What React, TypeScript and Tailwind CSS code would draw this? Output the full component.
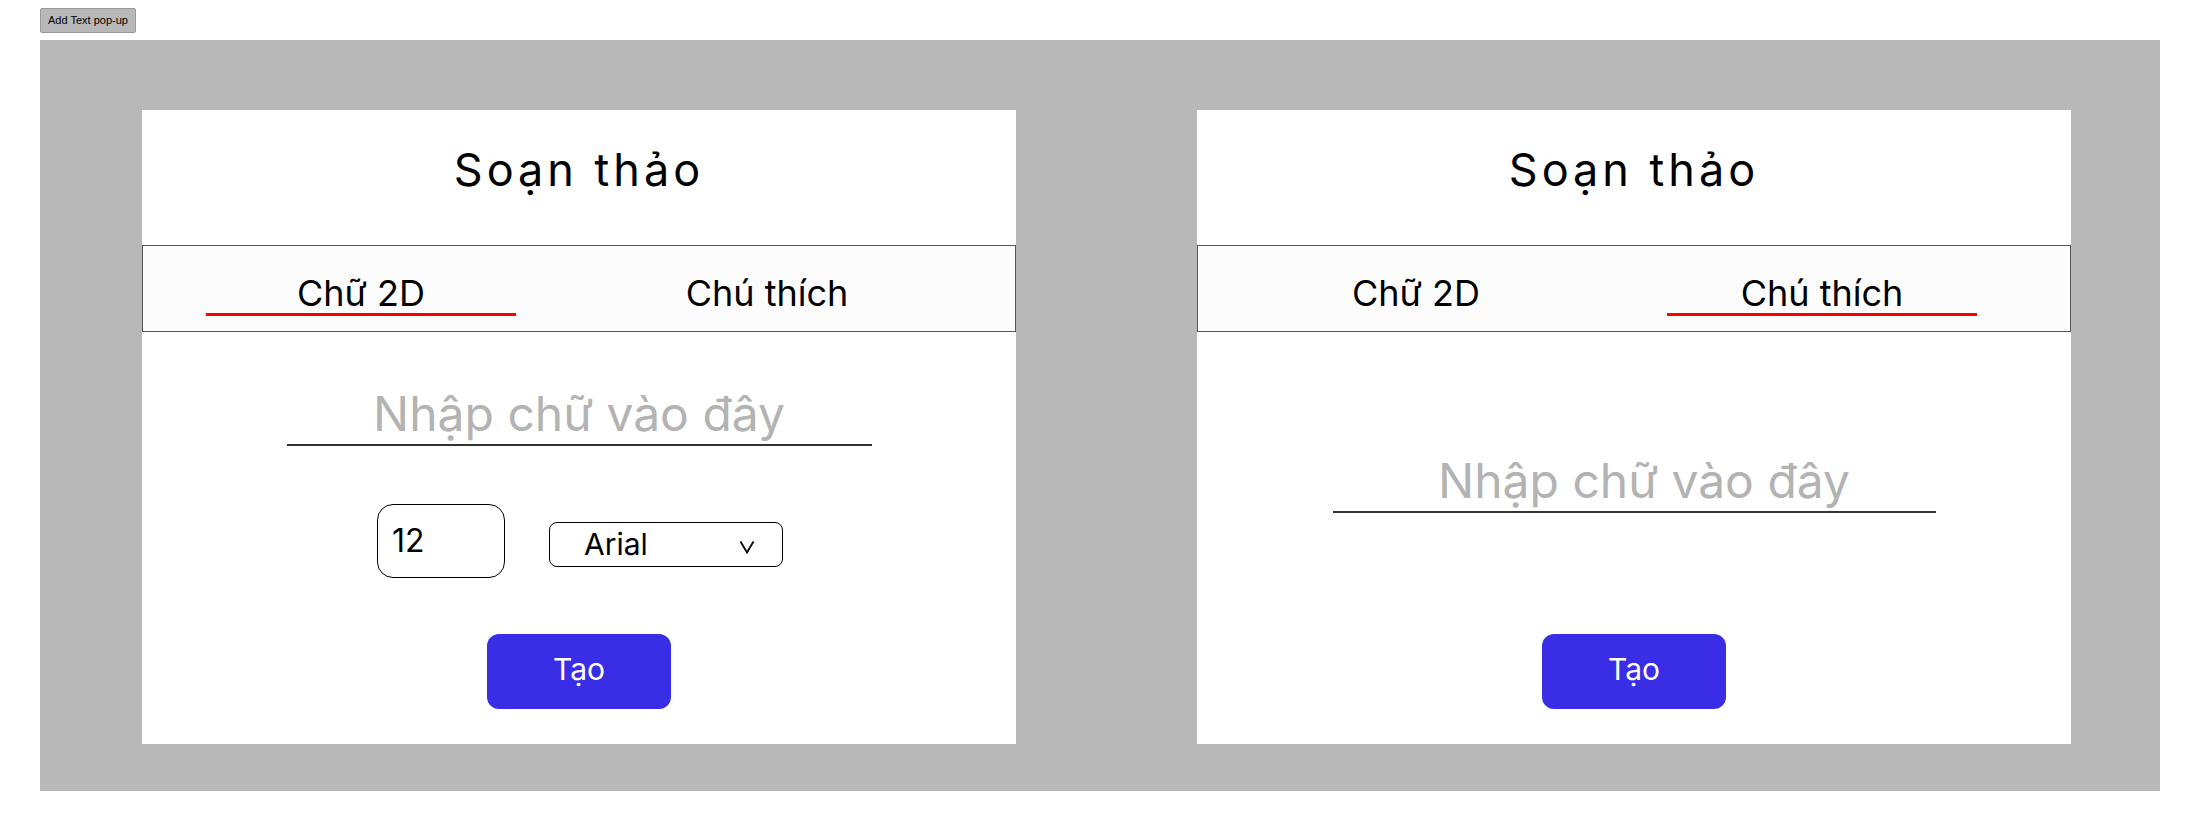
import { useState } from "react";

type Tab = "2d" | "note";

const font = { fontFamily: "Inter, 'Noto Sans', sans-serif" };

const TabBar = ({ active, onChange }: { active: Tab; onChange: (t: Tab) => void }) => (
  <div className="flex h-[87px] border border-[#555] bg-[#fcfcfc] pl-[63px] gap-[96px]">
    {[
      { id: "2d" as Tab, label: "Chữ 2D" },
      { id: "note" as Tab, label: "Chú thích" },
    ].map((t) => (
      <button
        key={t.id}
        onClick={() => onChange(t.id)}
        className="flex w-[310px] flex-col items-center pt-[29px]"
      >
        <span className="text-[36px] leading-[36px] text-black">{t.label}</span>
        <span
          className={`mt-[2px] h-[3px] w-full ${active === t.id ? "bg-[#ff0000]" : "bg-transparent"}`}
        />
      </button>
    ))}
  </div>
);

const TextLine = ({ width }: { width: string }) => (
  <div className={`${width} border-b-2 border-[#333] pb-[6px] text-center text-[48px] leading-[48px] text-[#b3b3b3]`}>
    Nhập chữ vào đây
  </div>
);

const CreateButton = () => (
  <button className="h-[75px] w-[184px] rounded-[12px] bg-[#3a2de6] pb-[6px] text-[30px] leading-none text-white">
    Tạo
  </button>
);

const EditorCard = ({ initial }: { initial: Tab }) => {
  const [tab, setTab] = useState<Tab>(initial);

  return (
    <div className="flex h-[634px] w-[874px] flex-col bg-white" style={font}>
      <div className="h-[135px] pt-[37px] text-center text-[45px] leading-[45px] tracking-[4px] text-black">
        Soạn thảo
      </div>
      <TabBar active={tab} onChange={setTab} />

      {tab === "2d" ? (
        <div className="flex flex-col items-center pt-[58px]">
          <TextLine width="w-[585px]" />
          <div className="mt-[58px] flex items-center gap-[44px] pl-[2px]">
            <div className="flex h-[74px] w-[128px] items-center rounded-[16px] border border-black pl-[14px] text-[32px] text-black">
              12
            </div>
            <div className="mt-[7px] flex h-[45px] w-[234px] items-center justify-between rounded-[8px] border border-black pl-[34px] pr-[27px] text-[30px] text-black">
              <span>Arial</span>
              <svg width="16" height="14" viewBox="0 0 16 14" fill="none" className="mt-[4px]">
                <polyline points="1.5,1.5 8,12.5 14.5,1.5" stroke="black" strokeWidth="1.8" />
              </svg>
            </div>
          </div>
          <div className="mt-[56px]">
            <CreateButton />
          </div>
        </div>
      ) : (
        <div className="flex flex-col items-center pt-[125px]">
          <TextLine width="w-[603px] pl-[20px]" />
          <div className="mt-[121px]">
            <CreateButton />
          </div>
        </div>
      )}
    </div>
  );
};

export default function App() {
  return (
    <div className="h-[831px] w-full bg-white">
      <div className="flex pl-[40px] pt-[8px]">
        <button
          className="h-[25px] w-[96px] rounded-[2px] border border-[#9a9a9a] bg-[#b8b8b8] text-[11px] leading-none text-black"
          style={{ fontFamily: "'Liberation Sans', Arial, sans-serif" }}
        >
          Add Text pop-up
        </button>
      </div>
      <div className="ml-[40px] mt-[7px] flex h-[751px] w-[2120px] gap-[181px] bg-[#b8b8b8] pl-[102px] pt-[70px]">
        <EditorCard initial="2d" />
        <EditorCard initial="note" />
      </div>
    </div>
  );
}
